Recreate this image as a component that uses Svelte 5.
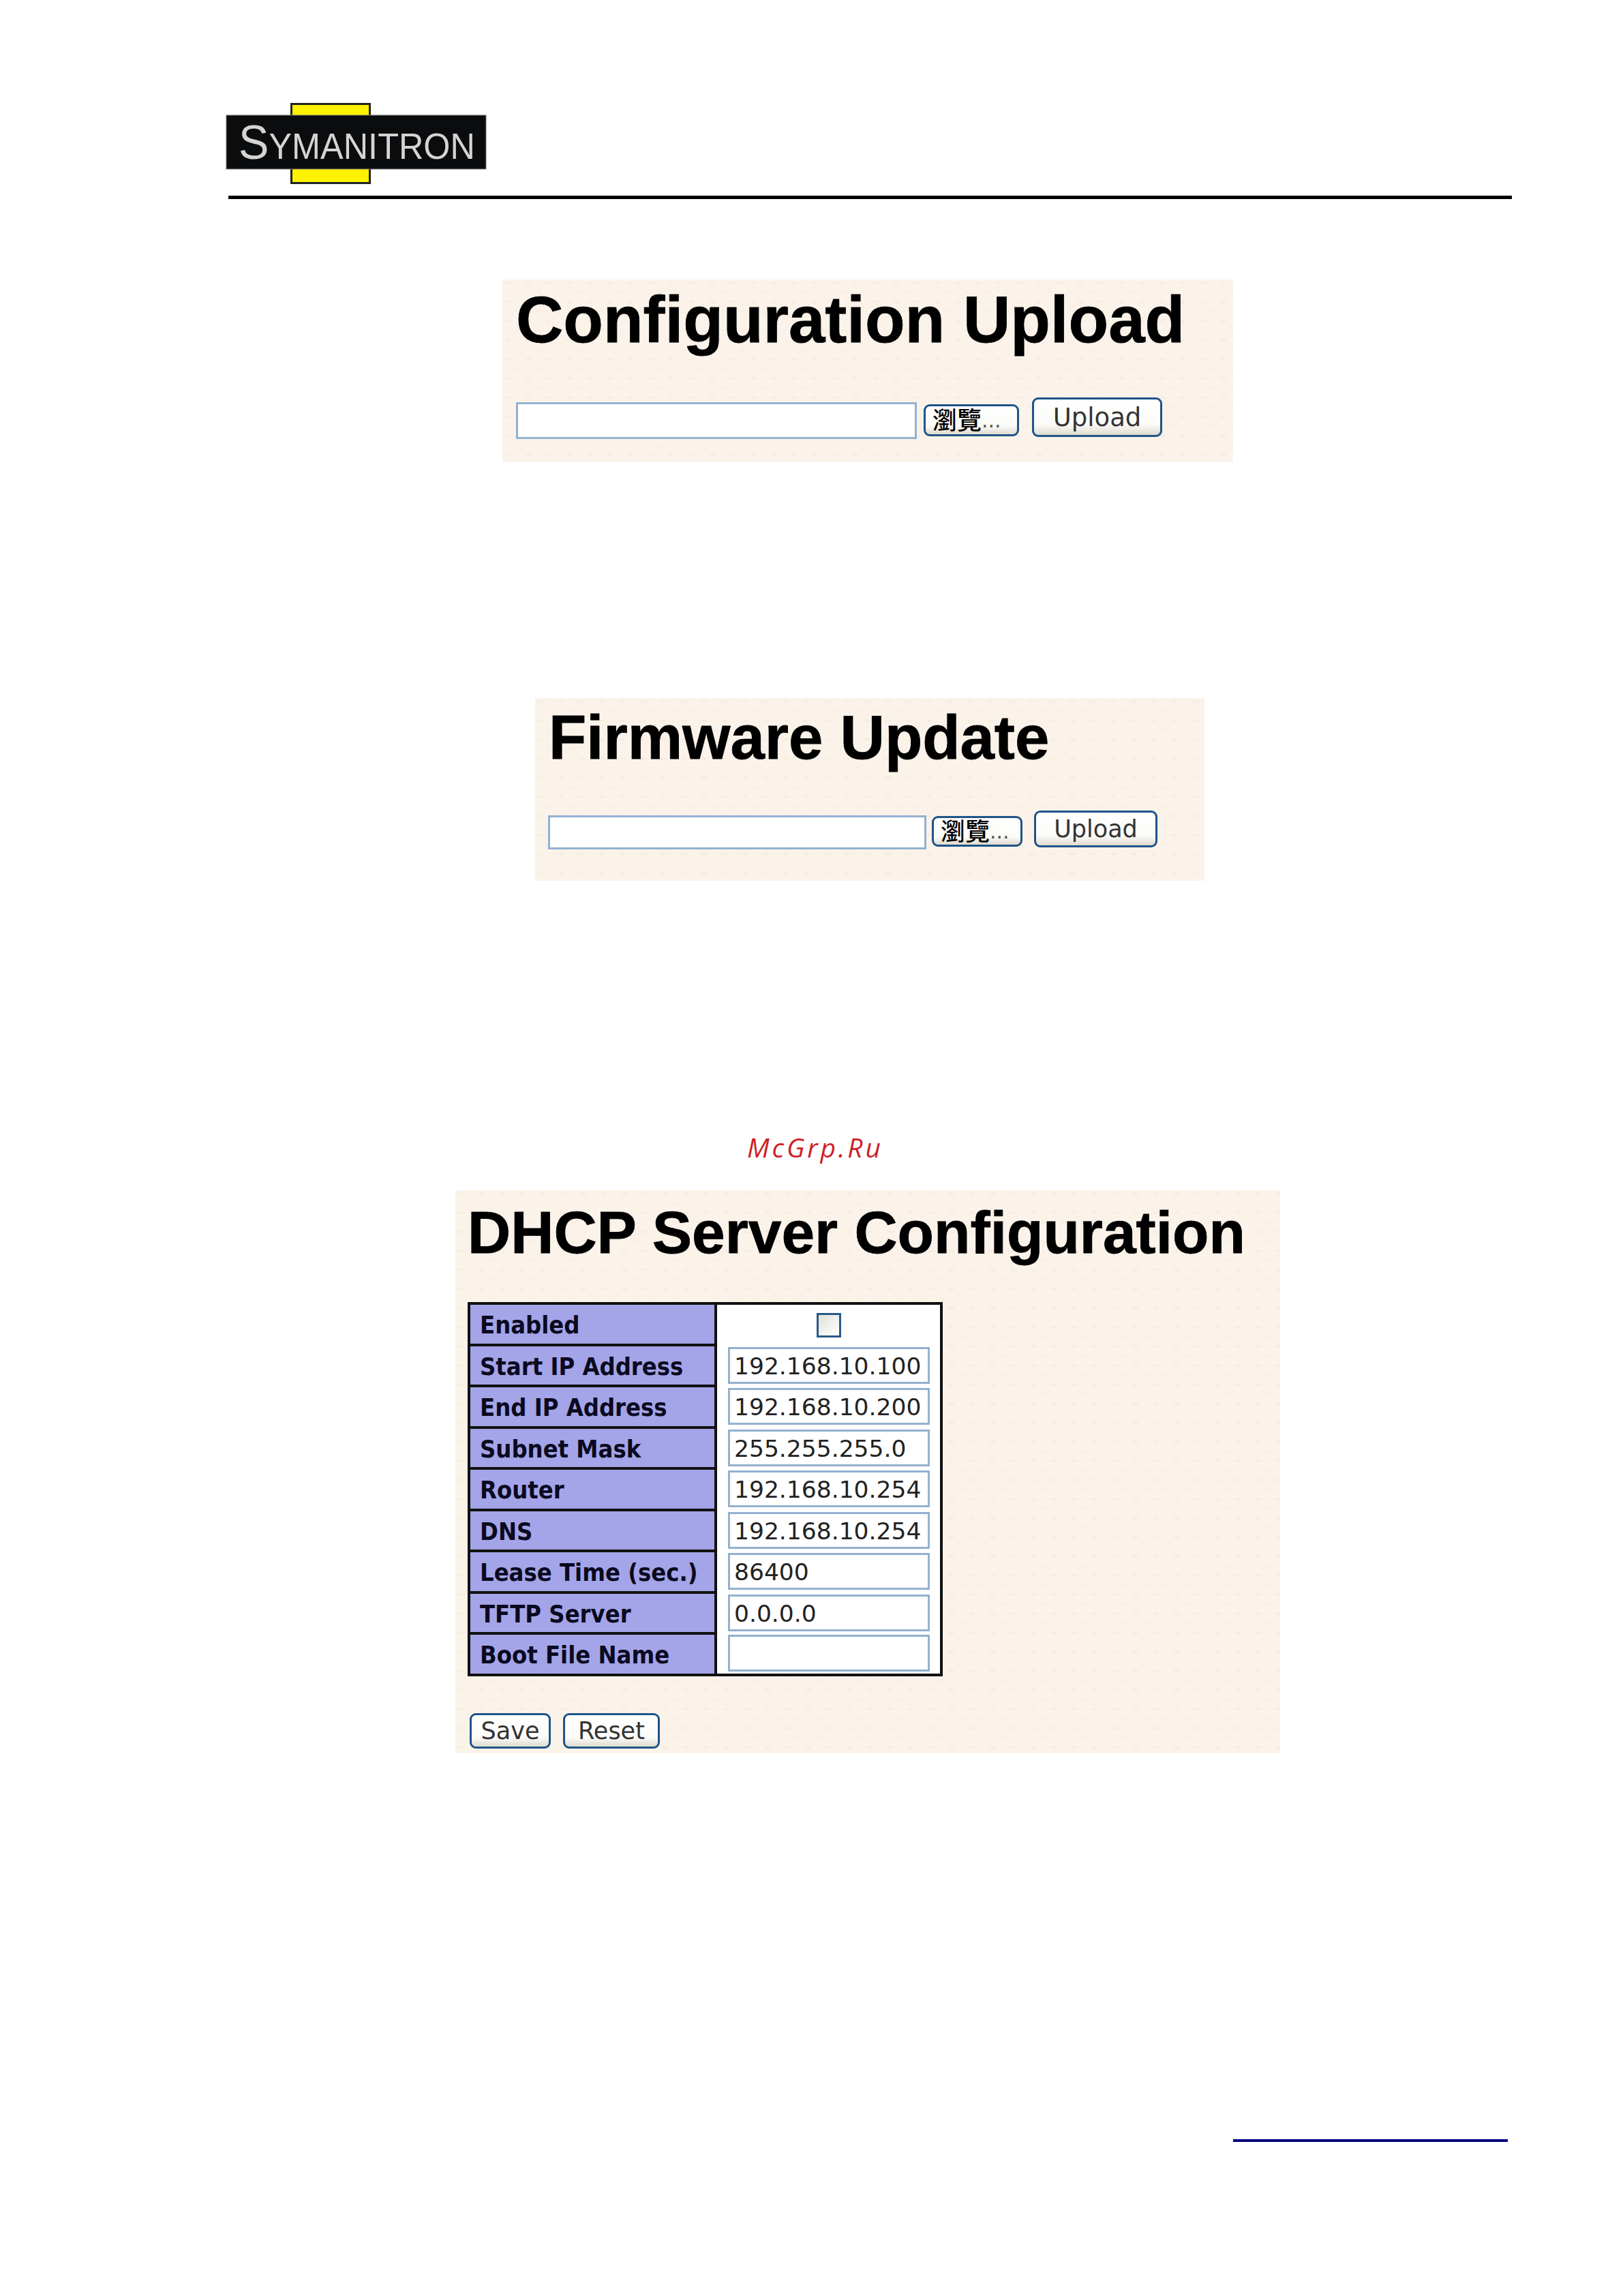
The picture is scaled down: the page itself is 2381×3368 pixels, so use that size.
<script>
  const rows = [
    { label: 'Start IP Address', value: '192.168.10.100' },
    { label: 'End IP Address', value: '192.168.10.200' },
    { label: 'Subnet Mask', value: '255.255.255.0' },
    { label: 'Router', value: '192.168.10.254' },
    { label: 'DNS', value: '192.168.10.254' },
    { label: 'Lease Time (sec.)', value: '86400' },
    { label: 'TFTP Server', value: '0.0.0.0' },
    { label: 'Boot File Name', value: '' },
  ];
</script>

<div class="page">
  <header>
    <svg class="logo" width="384" height="119" viewBox="0 0 384 119" role="img" aria-label="Symanitron logo">
      <rect x="96.5" y="1.5" width="115" height="116" fill="#fff200" stroke="#222" stroke-width="3" />
      <rect x="1" y="18" width="381" height="79" fill="#0b0c0e" stroke="#777" stroke-width="1" />
      <text x="19" y="82" class="logo-text" textLength="347" lengthAdjust="spacingAndGlyphs">S<tspan class="small">YMANITRON</tspan></text>
    </svg>
    <div class="rule"></div>
  </header>

  <section class="panel upload">
    <h1>Configuration Upload</h1>
    <div class="file-row">
      <div class="file-input"></div>
      <button class="browse"><span class="cjk">瀏覽</span>...</button>
      <button class="upload-btn">Upload</button>
    </div>
  </section>

  <section class="panel firmware">
    <h1>Firmware Update</h1>
    <div class="file-row">
      <div class="file-input"></div>
      <button class="browse"><span class="cjk">瀏覽</span>...</button>
      <button class="upload-btn">Upload</button>
    </div>
  </section>

  <div class="watermark">McGrp.Ru</div>

  <section class="panel dhcp">
    <h1>DHCP Server Configuration</h1>
    <table>
      <tbody>
        <tr>
          <th>Enabled</th>
          <td class="check-cell"><span class="checkbox"></span></td>
        </tr>
        {#each rows as row}
          <tr>
            <th>{row.label}</th>
            <td><div class="field">{row.value}</div></td>
          </tr>
        {/each}
      </tbody>
    </table>
    <div class="actions">
      <button class="save">Save</button>
      <button class="reset">Reset</button>
    </div>
  </section>

  <div class="footer-rule"></div>
</div>

<style>
  :global(body) {
    margin: 0;
    background: #fff;
  }

  .page {
    width: 2381px;
    height: 3368px;
    overflow: hidden;
    padding-top: 151px;
    box-sizing: border-box;
  }

  header {
    padding-left: 331px;
  }

  .logo {
    display: block;
    filter: blur(0.6px);
  }

  .logo-text {
    font-family: "Liberation Sans", sans-serif;
    font-size: 70px;
    fill: #d4d4d4;
  }

  .small {
    font-size: 53px;
  }

  .rule {
    width: 1883px;
    height: 5px;
    margin: 17px 0 0 4px;
    background: #000;
  }

  .panel {
    box-sizing: border-box;
    background-color: #fbf3ea;
    background-image:
      radial-gradient(ellipse 8px 3px at 8px 5px, #f5ebdf, transparent),
      radial-gradient(ellipse 8px 3px at 23px 19px, #f7eee3, transparent);
    background-size: 30px 28px;
  }

  h1 {
    margin: 0;
    font-family: "Liberation Sans", Arial, sans-serif;
    font-weight: 700;
    color: #000;
    -webkit-text-stroke: 0.8px #000;
  }

  button {
    box-sizing: border-box;
    padding: 0;
    border: 3px solid #1f5487;
    border-radius: 9px;
    background: linear-gradient(180deg, #fff 0%, #fbfbf8 70%, #dedbd0 100%);
    font-family: "DejaVu Sans", Verdana, sans-serif;
    color: #333;
  }

  .file-row {
    display: flex;
    align-items: flex-start;
  }

  .file-input {
    box-sizing: border-box;
    background: #fff;
    border: 3px solid #93b1cf;
  }

  .browse {
    display: flex;
    align-items: center;
    font-size: 30px;
    line-height: 36px;
    text-align: left;
    color: #555;
  }

  .cjk {
    font-family: "Noto Sans CJK TC", sans-serif;
    font-weight: 500;
    font-size: 36px;
    color: #000;
    margin-top: -6px;
  }

  /* first panel */
  .upload {
    width: 1072px;
    height: 268px;
    margin: 118px 0 0 737px;
    padding: 4px 0 0 20px;
  }

  .upload h1 {
    font-size: 96px;
    line-height: 110px;
    height: 176px;
  }

  .upload .file-row {
    margin-top: -7px;
  }

  .upload .file-input {
    width: 588px;
    height: 54px;
    margin-top: 7px;
  }

  .upload .browse {
    width: 140px;
    height: 47px;
    margin: 10px 0 0 10px;
    padding-left: 10px;
  }

  .upload .upload-btn {
    width: 191px;
    height: 58px;
    margin-left: 19px;
    font-size: 37px;
  }

  /* second panel */
  .firmware {
    width: 982px;
    height: 268px;
    margin: 346px 0 0 785px;
    padding: 8px 0 0 20px;
  }

  .firmware h1 {
    font-size: 90.5px;
    line-height: 100px;
    height: 157px;
  }

  .firmware .file-row {
    margin-left: -1px;
  }

  .firmware .file-input {
    width: 555px;
    height: 50px;
    margin-top: 7px;
  }

  .firmware .browse {
    width: 133px;
    height: 45px;
    margin: 8px 0 0 8px;
    padding-left: 10px;
  }

  .firmware .upload-btn {
    width: 181px;
    height: 54px;
    margin-left: 17px;
    font-size: 35px;
  }

  .watermark {
    margin: 0 0 0 1096px;
    padding-top: 366px;
    height: 88px;
    font-family: "Open Sans", sans-serif;
    font-style: italic;
    font-size: 39px;
    line-height: 50px;
    letter-spacing: 3.8px;
    color: #cf1f27;
    box-sizing: content-box;
  }

  /* dhcp panel */
  .dhcp {
    width: 1210px;
    height: 826px;
    margin-left: 668px;
    padding: 12px 0 0 18px;
  }

  .dhcp h1 {
    font-size: 87.5px;
    line-height: 100px;
    height: 152px;
  }

  table {
    width: 697px;
    border-collapse: collapse;
    border: 4px solid #111;
    background: #fff;
  }

  tr {
    height: 60.5px;
  }

  th {
    width: 362px;
    box-sizing: border-box;
    padding: 3px 0 0 14px;
    background: #a4a4e8;
    border: 4px solid #111;
    text-align: left;
    font-family: "DejaVu Sans", Verdana, sans-serif;
    font-stretch: condensed;
    font-size: 36px;
    font-weight: 700;
    color: #0a0a20;
    white-space: nowrap;
  }

  td {
    padding: 0 0 0 16px;
  }

  .check-cell {
    text-align: center;
    padding: 2px 0 0;
  }

  .checkbox {
    display: inline-block;
    box-sizing: border-box;
    width: 36px;
    height: 36px;
    vertical-align: middle;
    border: 3px solid #2a5a88;
    background: linear-gradient(135deg, #e2e2da, #fff);
  }

  .field {
    box-sizing: border-box;
    width: 296px;
    height: 54px;
    padding-left: 6px;
    background: #fff;
    border: 3px solid #93b1cf;
    font-family: "DejaVu Sans", Verdana, sans-serif;
    font-size: 34.5px;
    line-height: 50px;
    color: #222;
    white-space: nowrap;
  }

  .actions {
    display: flex;
    gap: 18px;
    margin: 54px 0 0 3px;
  }

  .actions button {
    height: 52px;
    font-size: 35px;
  }

  .save {
    width: 119px;
  }

  .reset {
    width: 142px;
  }

  .footer-rule {
    width: 403px;
    height: 4px;
    margin: 566px 0 0 1809px;
    background: #000080;
  }
</style>
